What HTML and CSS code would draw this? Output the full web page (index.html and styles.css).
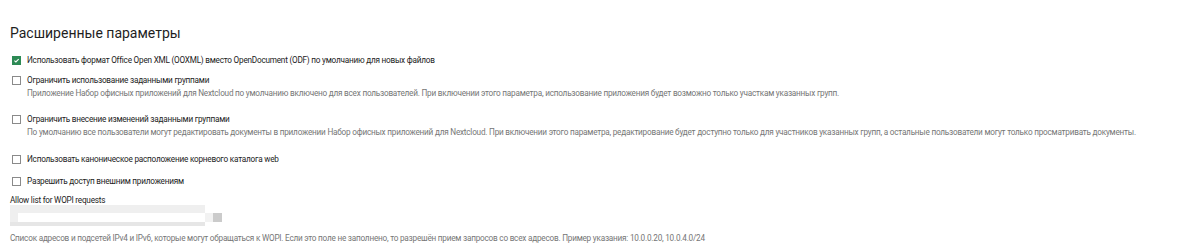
FILE: index.html
```html
<!DOCTYPE html>
<html lang="ru">
<head>
<meta charset="utf-8">
<link rel="stylesheet" href="styles.css">
</head>
<body>
<div class="section">
  <h2 class="title">Расширенные параметры</h2>
  <div class="opt opt-first">
    <span class="cb cb-on"><svg viewBox="0 0 9 9" width="9" height="9"><path d="M1.8 4.6 L3.7 6.4 L7.3 2.6" fill="none" stroke="#fff" stroke-width="1.4"/></svg></span>
    <span class="label">Использовать формат Office Open XML (OOXML) вместо OpenDocument (ODF) по умолчанию для новых файлов</span>
  </div>
  <div class="opt opt-2">
    <span class="cb"></span>
    <span class="label">Ограничить использование заданными группами</span>
  </div>
  <p class="desc">Приложение Набор офисных приложений для Nextcloud по умолчанию включено для всех пользователей. При включении этого параметра, использование приложения будет возможно только участкам указанных групп.</p>
  <div class="opt opt-3">
    <span class="cb"></span>
    <span class="label">Ограничить внесение изменений заданными группами</span>
  </div>
  <p class="desc">По умолчанию все пользователи могут редактировать документы в приложении Набор офисных приложений для Nextcloud. При включении этого параметра, редактирование будет доступно только для участников указанных групп, а остальные пользователи могут только просматривать документы.</p>
  <div class="opt opt-4">
    <span class="cb"></span>
    <span class="label">Использовать каноническое расположение корневого каталога web</span>
  </div>
  <div class="opt opt-5">
    <span class="cb"></span>
    <span class="label">Разрешить доступ внешним приложениям</span>
  </div>
  <div class="field-label">Allow list for WOPI requests</div>
  <div class="field">
    <div class="field-box">
      <div class="fb-top"></div>
      <div class="fb-mid"><div class="fb-left"></div><div class="fb-white"></div></div>
      <div class="fb-bot"></div>
    </div>
    <div class="field-side"><div class="fs-light"></div><div class="fs-dark"></div></div>
  </div>
  <p class="help">Список адресов и подсетей IPv4 и IPv6, которые могут обращаться к WOPI. Если это поле не заполнено, то разрешён прием запросов со всех адресов. Пример указания: 10.0.0.20, 10.0.4.0/24</p>
</div>
</body>
</html>
```

FILE: styles.css
```css
* { box-sizing: border-box; }
html, body { margin: 0; padding: 0; background: #fff; }
body {
  font-family: "Roboto", "Open Sans", "Liberation Sans", sans-serif;
  font-size: 8.2px;
  letter-spacing: -0.22px;
  color: #222;
  width: 1200px;
  height: 252px;
  overflow: hidden;
}
.section { padding: 22px 10px 0 10px; }
.title {
  margin: 0;
  font-size: 14px;
  font-weight: 400;
  letter-spacing: 0;
  line-height: 22px;
  color: #1e1e1e;
}
.opt {
  display: flex;
  align-items: center;
  gap: 6px;
  height: 12px;
  margin-left: 2px;
}
.opt-first { margin-top: 10px; }
.opt-2 { margin-top: 8px; }
.opt-3 { margin-top: 14px; }
.opt-4 { margin-top: 15px; }
.opt-5 { margin-top: 10px; }
.cb {
  width: 9px;
  height: 9px;
  border: 1px solid #8a8a8a;
  background: #fff;
  display: inline-flex;
  align-items: center;
  justify-content: center;
  flex: none;
}
.cb-on { background: #2d8a55; border-color: #2d8a55; }
.cb-on svg { display: block; }
.label { line-height: 12px; white-space: nowrap; }
.desc {
  margin: 1px 0 0 0;
  padding-left: 17px;
  color: #767676;
  line-height: 12px;
  white-space: nowrap;
}
.field-label { margin-top: 8px; line-height: 10px; }
.field { display: flex; align-items: flex-end; }
.field-box { width: 195px; height: 21px; display: flex; flex-direction: column; }
.fb-top { height: 8px; background: #efefef; }
.fb-mid { height: 9px; display: flex; }
.fb-left { width: 8px; background: #efefef; }
.fb-white { flex: 1; background: #fff; }
.fb-bot { height: 4px; background: #e6e6e6; }
.field-side { display: flex; height: 9px; margin-bottom: 4px; }
.fs-light { width: 8px; background: #f2f2f2; }
.fs-dark { width: 9px; background: #cbcbcb; }
.help {
  margin: 6px 0 0 0;
  color: #767676;
  line-height: 12px;
  white-space: nowrap;
}
```
